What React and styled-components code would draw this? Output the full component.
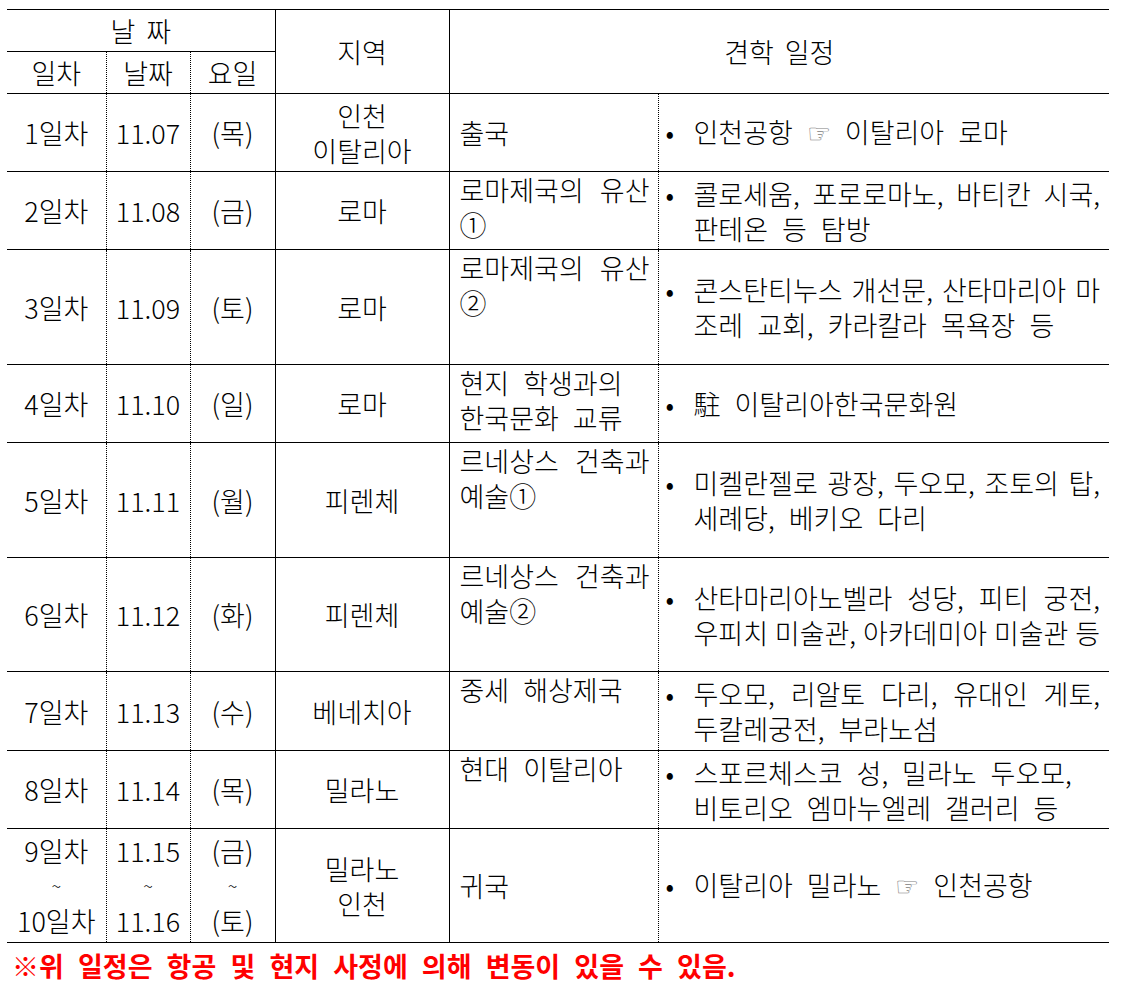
import React from 'react';
import styled, { createGlobalStyle } from 'styled-components';

const GlobalStyle = createGlobalStyle`
    html, body {
        margin: 0;
        padding: 0;
        background: #FFFFFF;
    }
    body {
        font-family: "Noto Sans CJK KR", "Noto Sans", sans-serif;
        color: #000000;
    }
`

const Page = styled.div`
    padding: 9px 0 0 7px;
`

const Schedule = styled.table`
    width: 1102px;
    table-layout: fixed;
    border-collapse: collapse;
    font-size: 27px;
    font-weight: 300;
    line-height: 35px;
    word-spacing: 8px;
`

const Head = styled.th`
    font-weight: 300;
    padding: 0;
    text-align: center;
    vertical-align: middle;
    word-spacing: 5px;
    border-top: 1px solid #000;
    border-bottom: 1px ${p => p.$dotBottom ? 'dotted' : 'solid'} #000;
    border-left: ${p => p.$edge ? 'none' : `1px ${p.$dotLeft ? 'dotted' : 'solid'} #000`};
`

const Row = styled.tr`
    height: ${p => p.$h}px;
`

const Cell = styled.td`
    padding: ${p => p.$pad || '0'};
    text-align: ${p => p.$left ? 'left' : 'center'};
    vertical-align: ${p => p.$top ? 'top' : 'middle'};
    border-top: 1px solid #000;
    border-bottom: 1px solid #000;
    border-left: ${p => p.$edge ? 'none' : `1px ${p.$dotLeft ? 'dotted' : 'solid'} #000`};
    white-space: nowrap;
`

const Line = styled.div`
    text-align: ${p => p.$justify ? 'justify' : 'inherit'};
    text-align-last: ${p => p.$justify ? 'justify' : 'auto'};
    word-spacing: ${p => p.$justify ? '0' : 'inherit'};
`

const Tilde = styled.div`
    font-size: 18px;
`

const Item = styled.div`
    display: flex;
    align-items: flex-start;
`

const Dot = styled.span`
    flex: 0 0 28px;
`

const ItemText = styled.div`
    flex: 1;
    min-width: 0;
`

const Pointer = styled.span`
    font-family: "DejaVu Sans", sans-serif;
    font-size: 27px;
    color: #808080;
    word-spacing: 0;
`

const Note = styled.p`
    margin: 5px 0 0 5px;
    color: #FF0000;
    font-weight: 700;
    font-size: 27px;
    line-height: 35px;
    word-spacing: 8px;
`

const days = [
    { h: 78, day: ['1일차'], date: ['11.07'], week: ['(목)'], area: ['인천', '이탈리아'],
      title: [{ t: '출국' }], titleTop: false,
      plan: [{ t: <>인천공항 <Pointer>☞</Pointer> 이탈리아 로마</> }] },
    { h: 78, day: ['2일차'], date: ['11.08'], week: ['(금)'], area: ['로마'],
      title: [{ t: '로마제국의 유산', j: true }, { t: '①' }], titleTop: true,
      plan: [{ t: '콜로세움, 포로로마노, 바티칸 시국,', j: true }, { t: '판테온 등 탐방' }] },
    { h: 115, day: ['3일차'], date: ['11.09'], week: ['(토)'], area: ['로마'],
      title: [{ t: '로마제국의 유산', j: true }, { t: '②' }], titleTop: true,
      plan: [{ t: '콘스탄티누스 개선문, 산타마리아 마', j: true }, { t: '조레 교회, 카라칼라 목욕장 등' }] },
    { h: 78, day: ['4일차'], date: ['11.10'], week: ['(일)'], area: ['로마'],
      title: [{ t: '현지 학생과의' }, { t: '한국문화 교류' }], titleTop: true,
      plan: [{ t: '駐 이탈리아한국문화원' }] },
    { h: 115, day: ['5일차'], date: ['11.11'], week: ['(월)'], area: ['피렌체'],
      title: [{ t: '르네상스 건축과', j: true }, { t: '예술①' }], titleTop: true,
      plan: [{ t: '미켈란젤로 광장, 두오모, 조토의 탑,', j: true }, { t: '세례당, 베키오 다리' }] },
    { h: 114, day: ['6일차'], date: ['11.12'], week: ['(화)'], area: ['피렌체'],
      title: [{ t: '르네상스 건축과', j: true }, { t: '예술②' }], titleTop: true,
      plan: [{ t: '산타마리아노벨라 성당, 피티 궁전,', j: true }, { t: '우피치 미술관, 아카데미아 미술관 등', j: true }] },
    { h: 79, day: ['7일차'], date: ['11.13'], week: ['(수)'], area: ['베네치아'],
      title: [{ t: '중세 해상제국' }], titleTop: true,
      plan: [{ t: '두오모, 리알토 다리, 유대인 게토,', j: true }, { t: '두칼레궁전, 부라노섬' }] },
    { h: 78, day: ['8일차'], date: ['11.14'], week: ['(목)'], area: ['밀라노'],
      title: [{ t: '현대 이탈리아' }], titleTop: true,
      plan: [{ t: '스포르체스코 성, 밀라노 두오모,' }, { t: '비토리오 엠마누엘레 갤러리 등' }] },
    { h: 114, day: ['9일차', '~', '10일차'], date: ['11.15', '~', '11.16'], week: ['(금)', '~', '(토)'], area: ['밀라노', '인천'],
      title: [{ t: '귀국' }], titleTop: false,
      plan: [{ t: <>이탈리아 밀라노 <Pointer>☞</Pointer> 인천공항</> }] },
];

function Lines({ list }) {
    return list.map((l, i) => l === '~'
        ? <Tilde key={i}><Line>~</Line></Tilde>
        : <Line key={i}>{l}</Line>);
}

function App() {
    return (
        <Page>
            <GlobalStyle />
            <Schedule>
                <colgroup>
                    <col style={{ width: 99 }} />
                    <col style={{ width: 84 }} />
                    <col style={{ width: 85 }} />
                    <col style={{ width: 174 }} />
                    <col style={{ width: 209 }} />
                    <col style={{ width: 451 }} />
                </colgroup>
                <thead>
                    <Row $h={42}>
                        <Head colSpan={3} $edge $dotBottom>날 짜</Head>
                        <Head rowSpan={2}>지역</Head>
                        <Head rowSpan={2} colSpan={2}>견학 일정</Head>
                    </Row>
                    <Row $h={42}>
                        <Head $edge>일차</Head>
                        <Head $dotLeft>날짜</Head>
                        <Head $dotLeft>요일</Head>
                    </Row>
                </thead>
                <tbody>
                    {days.map((d, i) => (
                        <Row key={i} $h={d.h}>
                            <Cell $edge><Lines list={d.day} /></Cell>
                            <Cell $dotLeft><Lines list={d.date} /></Cell>
                            <Cell $dotLeft><Lines list={d.week} /></Cell>
                            <Cell><Lines list={d.area} /></Cell>
                            <Cell $left $top={d.titleTop} $pad="0 8px 0 10px">
                                {d.title.map((l, k) => <Line key={k} $justify={l.j}>{l.t}</Line>)}
                            </Cell>
                            <Cell $left $dotLeft $pad="0 9px 0 7px">
                                <Item>
                                    <Dot>•</Dot>
                                    <ItemText>
                                        {d.plan.map((l, k) => <Line key={k} $justify={l.j}>{l.t}</Line>)}
                                    </ItemText>
                                </Item>
                            </Cell>
                        </Row>
                    ))}
                </tbody>
            </Schedule>
            <Note>※위 일정은 항공 및 현지 사정에 의해 변동이 있을 수 있음.</Note>
        </Page>
    )
}
export default App
